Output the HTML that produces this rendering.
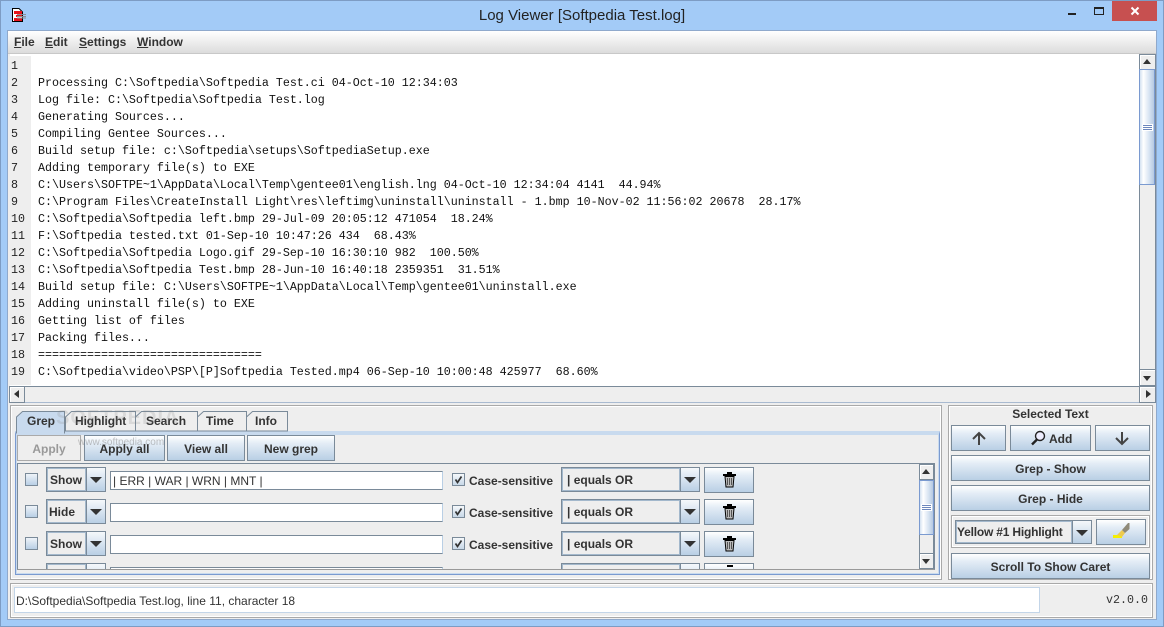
<!DOCTYPE html>
<html><head><meta charset="utf-8"><title>Log Viewer</title>
<style>
html,body{margin:0;padding:0}
body{width:1164px;height:627px;overflow:hidden;background:#a3cbf7;position:relative;font-family:"Liberation Sans",sans-serif;font-size:12px;color:#333}
div,span{position:absolute;box-sizing:border-box}
u{text-decoration:underline}
.t{white-space:nowrap;font-weight:bold;line-height:14px}
.ln{left:11px;width:20px;font:11.67px/17px "Liberation Mono",monospace;color:#222;white-space:pre}
.tx{left:38px;font:11.67px/17px "Liberation Mono",monospace;color:#111;white-space:pre}
.btn{border:1px solid #7a8a99;background:linear-gradient(#fff 0%,#e4edf6 30%,#b9cfe5 100%);text-align:center;font-weight:bold;white-space:nowrap;color:#333;display:block}
.etch{border:1px solid #a9a9a9;box-shadow:inset 0 0 0 1px #fff}
.cb{width:13px;height:13px;border:1px solid #7a8a99;background:linear-gradient(#eef3f9,#b9cfe5)}
.ck{background:linear-gradient(#f5f8fb,#c8d8e8)}
.ck svg{position:absolute;left:0;top:0}
.combo{border:2px solid #a3b8cc;outline:1px solid #7a8a99;outline-offset:-1px;background:#eee;font-weight:bold;white-space:nowrap}
.arr{background:linear-gradient(#f5f8fb,#b9cfe5);border:1px solid #7a8a99}
.tri{width:0;height:0;border-left:6px solid transparent;border-right:6px solid transparent;border-top:6px solid #333}
.field{background:#fff;border:1px solid #7a8a99;border-right-color:#b9cfe5;font-size:12px;white-space:nowrap}
.sbtn{background:#eee;border:1px solid #7a8a99;box-shadow:inset 1px 1px 0 #fff}
.tl{top:414px;font-weight:bold;line-height:14px;white-space:nowrap}
</style></head><body>
<!-- window frame -->
<div style="left:0;top:0;width:1164px;height:627px;border:1px solid #7d9cc4"></div>
<svg style="position:absolute;left:11px;top:7px" width="16" height="16" viewBox="0 0 16 16"><path d="M1.5 1.5H8L11.5 5V14.5H1.5Z" fill="#fff" stroke="#000"/><path d="M3 4H11V7H3ZM5 8H11V10H5ZM3 11H11V14H3Z" fill="#e8141c"/><path d="M6 7.5H15M6 9.5H15M6 11H15" stroke="#8a8f96"/></svg>
<div style="left:0;top:6px;width:1164px;text-align:center;font-size:15px;line-height:20px;color:#222">Log Viewer [Softpedia Test.log]</div>
<div style="left:1068px;top:13px;width:8px;height:2px;background:#222"></div>
<div style="left:1094px;top:7px;width:10px;height:8px;border:1px solid #222;border-top-width:2px"></div>
<div style="left:1112px;top:1px;width:45px;height:20px;background:#c75050"></div>
<svg style="position:absolute;left:1130px;top:6px" width="10" height="10" viewBox="0 0 10 10"><path d="M1.5 1.5L8.5 8.5M8.5 1.5L1.5 8.5" stroke="#fff" stroke-width="2"/></svg>
<!-- client -->
<div style="left:7px;top:30px;width:1150px;height:590px;background:#eee;border:1px solid #8fa9cc"></div>
<!-- menu -->
<div style="left:8px;top:31px;width:1148px;height:23px;background:linear-gradient(#fff,#dcdcdc);border-bottom:1px solid #c8c8c8"></div>
<div class="t" style="left:14px;top:35px"><u>F</u>ile</div>
<div class="t" style="left:45px;top:35px"><u>E</u>dit</div>
<div class="t" style="left:79px;top:35px"><u>S</u>ettings</div>
<div class="t" style="left:137px;top:35px"><u>W</u>indow</div>
<!-- text area -->
<div style="left:10px;top:54px;width:1129px;height:332px;background:#fff"></div>
<div style="left:10px;top:56px;width:21px;height:329px;background:#eee"></div>
<div class="ln" style="top:58px">1
2
3
4
5
6
7
8
9
10
11
12
13
14
15
16
17
18
19</div>
<div class="tx" style="top:75px">Processing C:\Softpedia\Softpedia Test.ci 04-Oct-10 12:34:03
Log file: C:\Softpedia\Softpedia Test.log
Generating Sources...
Compiling Gentee Sources...
Build setup file: c:\Softpedia\setups\SoftpediaSetup.exe
Adding temporary file(s) to EXE
C:\Users\SOFTPE~1\AppData\Local\Temp\gentee01\english.lng 04-Oct-10 12:34:04 4141  44.94%
C:\Program Files\CreateInstall Light\res\leftimg\uninstall\uninstall - 1.bmp 10-Nov-02 11:56:02 20678  28.17%
C:\Softpedia\Softpedia left.bmp 29-Jul-09 20:05:12 471054  18.24%
F:\Softpedia tested.txt 01-Sep-10 10:47:26 434  68.43%
C:\Softpedia\Softpedia Logo.gif 29-Sep-10 16:30:10 982  100.50%
C:\Softpedia\Softpedia Test.bmp 28-Jun-10 16:40:18 2359351  31.51%
Build setup file: C:\Users\SOFTPE~1\AppData\Local\Temp\gentee01\uninstall.exe
Adding uninstall file(s) to EXE
Getting list of files
Packing files...
================================
C:\Softpedia\video\PSP\[P]Softpedia Tested.mp4 06-Sep-10 10:00:48 425977  68.60%</div>
<!-- v scrollbar -->
<div style="left:1139px;top:54px;width:17px;height:332px;background:#eee;border:1px solid #7a8a99"></div>
<div class="sbtn" style="left:1139px;top:54px;width:17px;height:16px"></div>
<div class="tri" style="left:1143px;top:59px;border-top:0;border-bottom:5px solid #333;border-left-width:4px;border-right-width:4px"></div>
<div style="left:1139px;top:69px;width:16px;height:116px;border:1px solid #7a9ad0;background:linear-gradient(90deg,#d4e2f1,#fff 25%,#d8e4f2 65%,#b5c9e2)"></div>
<div style="left:1142px;top:124px;width:11px;height:7px;background:#fff"></div>
<div style="left:1143px;top:125px;width:9px;height:5px;border-top:1px solid #6c87bd;border-bottom:1px solid #6c87bd"></div>
<div style="left:1143px;top:127px;width:9px;height:1px;background:#6c87bd"></div>
<div class="sbtn" style="left:1139px;top:369px;width:17px;height:17px"></div>
<div class="tri" style="left:1143px;top:376px;border-left-width:4px;border-right-width:4px;border-top-width:5px"></div>
<!-- h scrollbar -->
<div style="left:9px;top:386px;width:1131px;height:17px;background:#eee;border-top:1px solid #7a8a99;border-bottom:1px solid #a9bad0"></div>
<div class="sbtn" style="left:9px;top:386px;width:16px;height:17px"></div>
<div class="tri" style="left:14px;top:390px;border-top:4px solid transparent;border-bottom:4px solid transparent;border-right:5px solid #333;border-left:0"></div>
<div class="sbtn" style="left:1139px;top:386px;width:17px;height:17px"></div>
<div class="tri" style="left:1146px;top:390px;border-top:4px solid transparent;border-bottom:4px solid transparent;border-left:5px solid #333;border-right:0"></div>
<!-- left panel -->
<div class="etch" style="left:10px;top:405px;width:932px;height:175px"></div>
<div style="left:15px;top:431px;width:925px;height:144px;border:1px solid #7a9ad0;border-top:3px solid #c8daee;box-shadow:inset 0 0 0 1px #c8daee"></div>
<!-- tabs -->
<svg style="position:absolute;left:0;top:0" width="300" height="440" viewBox="0 0 300 440">
<path d="M65.5 431V417L71.5 411.5H135.5V431ZM135.5 431V417L141.5 411.5H197.5V431ZM197.5 431V417L203.5 411.5H246.5V431ZM246.5 431V417L252.5 411.5H287.5V431Z" fill="#eee" stroke="#7a8a99"/>
<path d="M16.5 433V417L22.5 411.5H64.5V433Z" fill="#c8daee" stroke="#7a8a99"/>
<path d="M17 431H64V434H17Z" fill="#c8daee"/>
</svg>
<div class="tl" style="left:27px">Grep</div>
<div class="tl" style="left:75px;letter-spacing:-.1px">Highlight</div>
<div class="tl" style="left:146px">Search</div>
<div class="tl" style="left:206px">Time</div>
<div class="tl" style="left:255px">Info</div>
<div class="t" style="left:56px;top:408px;font-size:20px;line-height:20px;color:#888;opacity:.2;letter-spacing:1px">SOFTPEDIA</div>
<div class="btn" style="left:17px;top:435px;width:64px;height:26px;line-height:27px;background:#eee;border-color:#aaa;color:#999">Apply</div>
<div class="btn" style="left:84px;top:435px;width:81px;height:26px;line-height:26px">Apply all</div>
<div class="btn" style="left:167px;top:435px;width:78px;height:26px;line-height:26px">View all</div>
<div class="btn" style="left:247px;top:435px;width:88px;height:26px;line-height:26px">New grep</div>
<div class="t" style="left:78px;top:436px;font-size:10px;font-weight:normal;color:#888;opacity:.5">www.softpedia.com</div>
<div style="left:17px;top:463px;width:918px;height:107px;border:1px solid #7a8a99;border-bottom:1px solid #999;overflow:hidden;background:#eee">
 <div class="cb" style="left:7px;top:9px"></div>
 <div class="combo" style="left:28px;top:3px;width:41px;height:25px;padding:4px 0 0 2px">Show</div>
 <div class="arr" style="left:68px;top:3px;width:20px;height:25px"><div class="tri" style="left:3px;top:9px"></div></div>
 <div class="field" style="left:92px;top:7px;width:333px;height:19px;line-height:18px;padding-left:2px;color:#333">| ERR | WAR | WRN | MNT |</div>
 <div class="cb ck" style="left:434px;top:9px"><svg width="11" height="11" viewBox="0 0 11 11"><path d="M2.5 5.5L4.5 8.5L8.5 2.5" fill="none" stroke="#333" stroke-width="1.7"/></svg></div>
 <div class="t" style="left:451px;top:10px">Case-sensitive</div>
 <div class="combo" style="left:543px;top:3px;width:120px;height:25px;padding:4px 0 0 4px">| equals OR</div>
 <div class="arr" style="left:662px;top:3px;width:20px;height:25px"><div class="tri" style="left:3px;top:9px"></div></div>
 <div class="btn" style="left:686px;top:3px;width:50px;height:26px"><svg style="position:absolute;left:17px;top:4px" width="15" height="16" viewBox="0 0 15 16"><path d="M1 3H14M5 1H10" stroke="#000" stroke-width="2"/><path d="M3 4.5L4 15H11L12 4.5Z" fill="#bbb" stroke="#000"/><path d="M5.5 6V13M7.5 6V13M9.5 6V13" stroke="#555"/></svg></div>

 <div class="cb" style="left:7px;top:41px"></div>
 <div class="combo" style="left:28px;top:35px;width:41px;height:25px;padding:4px 0 0 1px">Hide</div>
 <div class="arr" style="left:68px;top:35px;width:20px;height:25px"><div class="tri" style="left:3px;top:9px"></div></div>
 <div class="field" style="left:92px;top:39px;width:333px;height:19px"></div>
 <div class="cb ck" style="left:434px;top:41px"><svg width="11" height="11" viewBox="0 0 11 11"><path d="M2.5 5.5L4.5 8.5L8.5 2.5" fill="none" stroke="#333" stroke-width="1.7"/></svg></div>
 <div class="t" style="left:451px;top:42px">Case-sensitive</div>
 <div class="combo" style="left:543px;top:35px;width:120px;height:25px;padding:4px 0 0 4px">| equals OR</div>
 <div class="arr" style="left:662px;top:35px;width:20px;height:25px"><div class="tri" style="left:3px;top:9px"></div></div>
 <div class="btn" style="left:686px;top:35px;width:50px;height:26px"><svg style="position:absolute;left:17px;top:4px" width="15" height="16" viewBox="0 0 15 16"><path d="M1 3H14M5 1H10" stroke="#000" stroke-width="2"/><path d="M3 4.5L4 15H11L12 4.5Z" fill="#bbb" stroke="#000"/><path d="M5.5 6V13M7.5 6V13M9.5 6V13" stroke="#555"/></svg></div>

 <div class="cb" style="left:7px;top:73px"></div>
 <div class="combo" style="left:28px;top:67px;width:41px;height:25px;padding:4px 0 0 2px">Show</div>
 <div class="arr" style="left:68px;top:67px;width:20px;height:25px"><div class="tri" style="left:3px;top:9px"></div></div>
 <div class="field" style="left:92px;top:71px;width:333px;height:19px"></div>
 <div class="cb ck" style="left:434px;top:73px"><svg width="11" height="11" viewBox="0 0 11 11"><path d="M2.5 5.5L4.5 8.5L8.5 2.5" fill="none" stroke="#333" stroke-width="1.7"/></svg></div>
 <div class="t" style="left:451px;top:74px">Case-sensitive</div>
 <div class="combo" style="left:543px;top:67px;width:120px;height:25px;padding:4px 0 0 4px">| equals OR</div>
 <div class="arr" style="left:662px;top:67px;width:20px;height:25px"><div class="tri" style="left:3px;top:9px"></div></div>
 <div class="btn" style="left:686px;top:67px;width:50px;height:26px"><svg style="position:absolute;left:17px;top:4px" width="15" height="16" viewBox="0 0 15 16"><path d="M1 3H14M5 1H10" stroke="#000" stroke-width="2"/><path d="M3 4.5L4 15H11L12 4.5Z" fill="#bbb" stroke="#000"/><path d="M5.5 6V13M7.5 6V13M9.5 6V13" stroke="#555"/></svg></div>

 <div class="combo" style="left:28px;top:99px;width:41px;height:25px"></div>
 <div class="arr" style="left:68px;top:99px;width:20px;height:25px"></div>
 <div class="field" style="left:92px;top:103px;width:333px;height:19px"></div>
 <div class="combo" style="left:543px;top:99px;width:120px;height:25px"></div>
 <div class="arr" style="left:662px;top:99px;width:20px;height:25px"></div>
 <div class="btn" style="left:686px;top:99px;width:50px;height:26px"></div>
 <div style="left:709px;top:101px;width:6px;height:2px;background:#000"></div>

 <!-- inner scrollbar -->
 <div style="left:901px;top:0;width:15px;height:105px;background:#eee;border:1px solid #7a8a99;border-top:0;border-bottom:0"></div>
 <div class="sbtn" style="left:901px;top:0;width:15px;height:16px"></div>
 <div class="tri" style="left:904px;top:5px;border-top:0;border-bottom:5px solid #333;border-left-width:4px;border-right-width:4px"></div>
 <div style="left:901px;top:16px;width:15px;height:55px;border:1px solid #7a9ad0;background:linear-gradient(90deg,#d4e2f1,#fff 25%,#d8e4f2 65%,#b5c9e2)"></div>
 <div style="left:903px;top:40px;width:11px;height:7px;background:#fff"></div>
 <div style="left:904px;top:41px;width:9px;height:5px;border-top:1px solid #6c87bd;border-bottom:1px solid #6c87bd"></div>
 <div style="left:904px;top:43px;width:9px;height:1px;background:#6c87bd"></div>
 <div class="sbtn" style="left:901px;top:89px;width:15px;height:16px"></div>
 <div class="tri" style="left:904px;top:95px;border-left-width:4px;border-right-width:4px;border-top-width:5px"></div>
</div>
<!-- right panel -->
<div class="etch" style="left:948px;top:405px;width:205px;height:175px"></div>
<div class="t" style="left:948px;top:407px;width:205px;text-align:center">Selected Text</div>
<div class="btn" style="left:951px;top:425px;width:55px;height:26px"><svg style="position:absolute;left:20px;top:5px" width="14" height="15" viewBox="0 0 14 15"><path d="M7 14V2M1 8L7 2L13 8" fill="none" stroke="#444" stroke-width="2"/></svg></div>
<div class="btn" style="left:1010px;top:425px;width:81px;height:26px;line-height:26px;padding-left:38px;text-align:left">Add<svg style="position:absolute;left:19px;top:4px" width="16" height="16" viewBox="0 0 16 16"><circle cx="10" cy="6" r="4.5" fill="#eef" stroke="#222" stroke-width="1.4"/><path d="M7 9.5L2 14.5" stroke="#222" stroke-width="2.4"/></svg></div>
<div class="btn" style="left:1095px;top:425px;width:55px;height:26px"><svg style="position:absolute;left:19px;top:5px" width="14" height="15" viewBox="0 0 14 15"><path d="M7 1V13M1 7L7 13L13 7" fill="none" stroke="#444" stroke-width="2"/></svg></div>
<div class="btn" style="left:951px;top:455px;width:199px;height:26px;line-height:26px">Grep - Show</div>
<div class="btn" style="left:951px;top:485px;width:199px;height:26px;line-height:26px">Grep - Hide</div>
<div class="etch" style="left:951px;top:515px;width:199px;height:33px"></div>
<div class="combo" style="left:955px;top:520px;width:118px;height:24px;padding:3px 0 0 0;letter-spacing:-.2px">Yellow #1 Highlight</div>
<div class="arr" style="left:1072px;top:520px;width:20px;height:24px"><div class="tri" style="left:3px;top:9px"></div></div>
<div class="btn" style="left:1096px;top:519px;width:50px;height:26px"><svg style="position:absolute;left:16px;top:3px" width="18" height="19" viewBox="0 0 18 19"><path d="M0 12H9V15H0Z" fill="#f5f000"/><path d="M4 12L9 7L12 10L9 14Z" fill="#eecb50"/><path d="M9 7L15 0H16.5V6L12 10Z" fill="#8f8a78"/></svg></div>
<div class="btn" style="left:951px;top:553px;width:199px;height:26px;line-height:26px">Scroll To Show Caret</div>
<!-- status -->
<div class="etch" style="left:10px;top:583px;width:1143px;height:35px"></div>
<div style="left:14px;top:587px;width:1026px;height:26px;background:#fff;border:1px solid #c3d5e8;font-size:12px;line-height:26px;padding-left:1px;color:#333;white-space:nowrap">D:\Softpedia\Softpedia Test.log, line 11, character 18</div>
<div style="left:1106px;top:593px;font:11.67px/15px 'Liberation Mono',monospace;color:#333;white-space:nowrap">v2.0.0</div>
</body></html>
